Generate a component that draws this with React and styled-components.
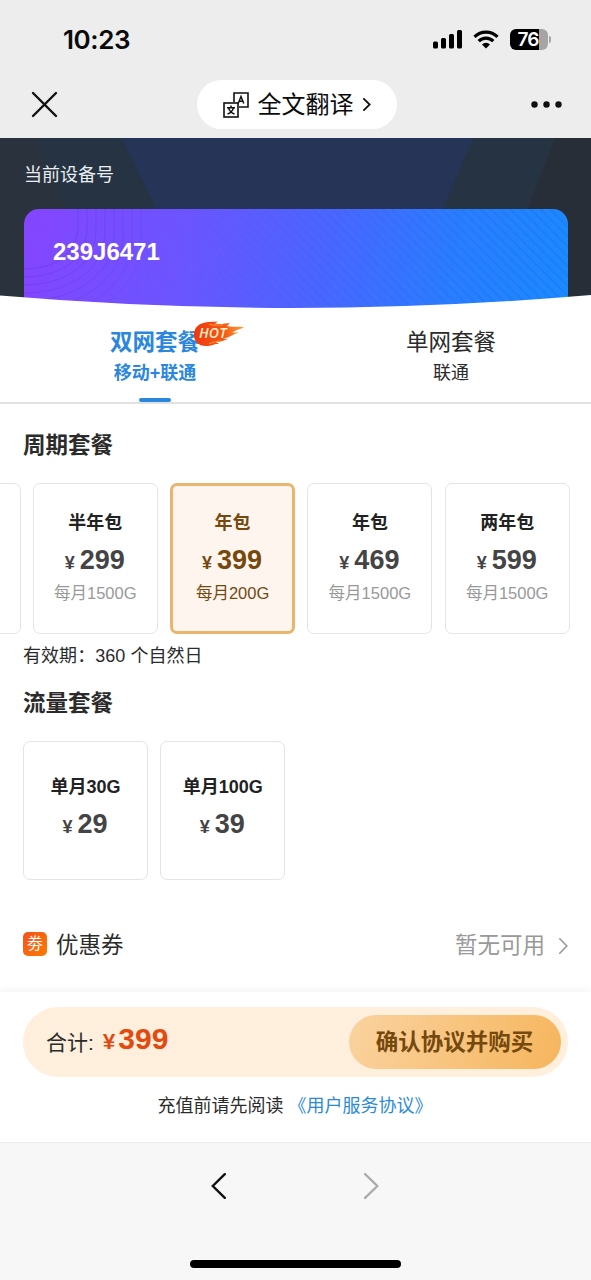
import { useState } from 'react'
import styled, { createGlobalStyle } from 'styled-components'



const GlobalStyle = createGlobalStyle`
  * {
    box-sizing: border-box;
  }
  body {
    margin: 0;
    background-color: white;
    font-family: "Liberation Sans", "Noto Sans CJK SC", sans-serif;
    color: #2b2b2b;
  }
  button {
    border: none;
    padding: 0;
    background: none;
    font-family: inherit;
    color: inherit;
  }
`;

const Page = styled.div`
    width: 591px;
    height: 1280px;
    display: flex;
    flex-direction: column;
    overflow: hidden;
    background-color: white;
`;

/* top of the phone */

const Top = styled.header`
    height: 138px;
    flex-shrink: 0;
    background-color: #ededed;
    color: #0b0b0b;
`;
const StatusBar = styled.div`
    height: 79px;
    display: flex;
    align-items: center;
    justify-content: space-between;
    padding: 0 40px 0 63px;
`;
const Clock = styled.div`
    font-family: Inter, sans-serif;
    font-size: 26px;
    font-weight: 600;
    letter-spacing: -0.4px;
`;
const StatusIcons = styled.div`
    display: flex;
    align-items: center;
    gap: 11px;
`;
const Battery = styled.div`
    display: flex;
    align-items: center;
    gap: 1px;
`;
const BatteryBody = styled.div`
    width: 38px;
    height: 21px;
    border-radius: 6px;
    background: linear-gradient(to right, black 0 29px, #a5a5a5 29px);
    color: white;
    font-family: Inter, sans-serif;
    font-size: 19px;
    font-weight: 600;
    line-height: 21px;
    letter-spacing: -0.8px;
    padding-right: 2px;
    text-align: center;
`;
const BatteryTip = styled.div`
    width: 2px;
    height: 7px;
    border-radius: 0 2px 2px 0;
    background-color: #a5a5a5;
`;
const NavBar = styled.div`
    display: grid;
    grid-template-columns: 1fr 200px 1fr;
    align-items: center;
    padding: 0 29px 0 31px;
    height: 51px;

    > svg:last-child {
      justify-self: end;
    }
`;
const Translate = styled.button`
    width: 200px;
    height: 49px;
    border-radius: 25px;
    background-color: white;
    display: flex;
    align-items: center;
    justify-content: center;
    gap: 9px;
    font-size: 24px;
    line-height: 32px;
`;
const TranslateLabel = styled.span`
    padding-top: 1px;
`;

/* device card */

const Hero = styled.section`
    height: 170px;
    flex-shrink: 0;
    position: relative;
    overflow: hidden;
    background-color: #2a323d;
`;
const HeroArt = styled.svg`
    position: absolute;
    top: 0;
    left: 0;
`;
const HeroBody = styled.div`
    position: relative;
    padding: 25px 23px 0 24px;
`;
const HeroLabel = styled.div`
    height: 46px;
    font-size: 18px;
    line-height: 24px;
    color: #e9eef3;
`;
const DeviceCard = styled.div`
    height: 110px;
    border-radius: 15px 15px 0 0;
    overflow: hidden;
    position: relative;
    background: linear-gradient(100deg, #8545ff 0%, #6a55ff 30%, #4a66ff 55%, #2a7dff 78%, #1b8aff 100%);
`;
const DeviceNumber = styled.div`
    position: relative;
    padding: 29px 0 0 29px;
    font-size: 24px;
    line-height: 28px;
    font-weight: 700;
    color: white;
`;

/* tabs */

const Tabs = styled.nav`
    height: 96px;
    flex-shrink: 0;
    display: grid;
    grid-template-columns: 296px 296px;
    padding-left: 7px;
    border-bottom: 2px solid #e1e2e3;
`;
const Tab = styled.button`
    display: flex;
    flex-direction: column;
    align-items: center;
    padding-top: 19px;
    color: ${props => props.$active ? '#2b87dd' : '#2b2b2b'};
    font-weight: ${props => props.$active ? 700 : 400};
`;
const TabName = styled.span`
    position: relative;
    font-size: 22.5px;
    line-height: 32px;
`;
const TabNet = styled.span`
    font-size: 18px;
    line-height: 28px;
`;
const TabLine = styled.span`
    width: 32px;
    height: 4px;
    margin-top: 11px;
    border-radius: 2px;
    background-color: #2b87dd;
`;
const HotBadge = styled.span`
    position: absolute;
    top: -6px;
    left: 83px;
    width: 52px;
    height: 26px;
    display: flex;

    svg {
      position: absolute;
      top: 0;
      left: 0;
    }
`;
const HotText = styled.span`
    position: relative;
    margin-left: 6px;
    color: #fff3c4;
    font-family: "Open Sans", sans-serif;
    font-size: 14px;
    font-weight: 600;
    font-style: italic;
    line-height: 23px;
    letter-spacing: 0.2px;
`;

/* plans */

const Content = styled.main`
    height: 588px;
    flex-shrink: 0;
    padding: 26px 0 0 23px;
    overflow: hidden;
`;
const Heading = styled.h2`
    margin: 0;
    height: 53px;
    font-size: 22.5px;
    line-height: 32px;
    font-weight: 700;
`;
const PlanRow = styled.div`
    display: flex;
    gap: 12.3px;
    margin-left: ${props => props.$shift || 0}px;
`;
const Plan = styled.div`
    width: 125px;
    height: ${props => props.$height}px;
    flex-shrink: 0;
    display: flex;
    flex-direction: column;
    align-items: center;
    justify-content: center;
    padding-bottom: 3px;
    border: ${props => props.$active ? '3px solid #e9b56c' : '1.5px solid #e4e4e4'};
    border-radius: 7px;
    background-color: ${props => props.$active ? '#fef5ee' : 'white'};
    color: ${props => props.$active ? '#75490e' : '#444'};
`;
const PlanName = styled.div`
    font-size: 18px;
    line-height: 28px;
    font-weight: 700;
    color: ${props => props.$active ? '#75490e' : '#222'};
`;
const Price = styled.div`
    font-size: 27px;
    line-height: 36px;
    margin: 5px 1px 0 0;
    font-weight: 700;
`;
const Yen = styled.span`
    font-size: ${props => props.$size || 18}px;
    margin-right: ${props => props.$gap || 5}px;
`;
const PlanData = styled.div`
    font-size: 16.5px;
    line-height: 24px;
    color: ${props => props.$active ? '#75490e' : '#999'};
`;
const Validity = styled.div`
    height: 54px;
    padding-top: 8px;
    font-size: 18px;
    line-height: 28px;
    letter-spacing: 0.05px;
`;
const Coupon = styled.div`
    display: flex;
    align-items: center;
    height: 32px;
    margin-top: 50px;
    padding-right: 23px;
    font-size: 22.5px;
    line-height: 32px;
`;
const CouponIcon = styled.span`
    width: 24px;
    height: 24px;
    margin: -5px 9px 0 0;
    border-radius: 5px;
    background: linear-gradient(135deg, #f4511e, #ff7a00);
    color: white;
    font-size: 16px;
    line-height: 24px;
    text-align: center;
`;
const CouponState = styled.span`
    margin-left: auto;
    margin-right: 14px;
    color: #999;
`;

/* payment */

const Payment = styled.section`
    height: 150px;
    flex-shrink: 0;
    padding: 15px 23px 0;
    background-color: white;
    box-shadow: 0 -2px 8px rgba(0, 0, 0, 0.05);
`;
const TotalBar = styled.div`
    height: 70px;
    border-radius: 35px;
    background-color: #ffefdc;
    display: flex;
    align-items: center;
    padding: 0 7px 0 23px;
`;
const TotalLabel = styled.span`
    padding-bottom: 2px;
    font-size: 21px;
`;
const Total = styled.span`
    margin-left: 9px;
    padding-bottom: 4px;
    font-size: 30px;
    font-weight: 700;
    line-height: 36px;
    color: #e34a10;
`;
const BuyButton = styled.button`
    width: 212px;
    height: 54px;
    margin-left: auto;
    padding: 2px 1px 0 0;
    border-radius: 27px;
    background: linear-gradient(110deg, #fad3a0, #f6b55c);
    color: #75490e;
    font-size: 22.5px;
    font-weight: 700;
    line-height: 32px;
`;
const Agreement = styled.p`
    margin: 15px 0 0;
    padding-right: 1px;
    font-size: 18px;
    line-height: 28px;
    text-align: center;
`;
const AgreementLink = styled.span`
    color: #2b8ad6;
`;

const Bottom = styled.footer`
    height: 138px;
    flex-shrink: 0;
    display: flex;
    flex-direction: column;
    align-items: center;
    justify-content: space-between;
    padding: 30px 0 12px;
    border-top: 1px solid #ebebeb;
    background-color: #f7f7f7;
`;
const HistoryButtons = styled.div`
    display: flex;
    gap: 138px;
    padding-right: 1px;
`;
const HomeBar = styled.div`
    width: 211px;
    height: 8px;
    border-radius: 4px;
    background-color: black;
`;

const cyclePlans = [
  { id: 0, name: '', price: '', data: '' },
  { id: 1, name: '半年包', price: '299', data: '每月1500G' },
  { id: 2, name: '年包', price: '399', data: '每月200G' },
  { id: 3, name: '年包', price: '469', data: '每月1500G' },
  { id: 4, name: '两年包', price: '599', data: '每月1500G' },
]

const dataPlans = [
  { id: 5, name: '单月30G', price: '29' },
  { id: 6, name: '单月100G', price: '39' },
]

function Chevron({ width, height, color, stroke, left }){
  const s = stroke / 2
  const d = left
    ? `M${width - s} ${s}L${s * 1.5} ${height / 2}L${width - s} ${height - s}`
    : `M${s} ${s}L${width - s * 1.5} ${height / 2}L${s} ${height - s}`
  return (
    <svg width={width} height={height} fill="none" stroke={color} strokeWidth={stroke} strokeLinecap="round">
      <path d={d}/>
    </svg>
  )
}

function TranslateIcon(){
  return (
    <svg width="26" height="26" viewBox="0 0 26 26" fill="none" stroke="#111" strokeWidth="1.6">
      <path d="M11 10V1h14v14h-9"/>
      <rect x="1" y="11" width="14" height="14"/>
      <path d="M15.200 11.500L18 4.500l2.800 7M16.200 9.300h3.600" strokeWidth="1.500"/>
      <path d="M8 13.500v2M4 15.800h8M5.500 16c1 3 3 5 6 6M10.500 16c-1 3-3 5-6 6" strokeWidth="1.500"/>
    </svg>
  )
}

function Signal(){
  return (
    <svg width="30" height="19" viewBox="0 0 30 19" fill="black">
      <rect x="1" y="11.500" width="5" height="7" rx="1.500"/>
      <rect x="9" y="8" width="5" height="10.500" rx="1.500"/>
      <rect x="17" y="4" width="5" height="14.500" rx="1.500"/>
      <rect x="25" y="0" width="5" height="18.500" rx="1.500"/>
    </svg>
  )
}

function Wifi(){
  return (
    <svg width="26" height="19" viewBox="0 0 26 19" fill="none" stroke="black" strokeWidth="3.200">
      <path d="M1.500 6.800a16.300 16.300 0 0 1 23 0"/>
      <path d="M5.700 11.200a10.300 10.300 0 0 1 14.600 0"/>
      <path d="M13 18.500l-4-4a5.700 5.700 0 0 1 8 0z" fill="black" stroke="none"/>
    </svg>
  )
}

function Flame(){
  return (
    <svg width="52" height="26" viewBox="0 0 52 26">
      <defs>
        <linearGradient id="flame" x1="0" y1="0" x2="1" y2="0">
          <stop offset="0" stopColor="#f0380d"/>
          <stop offset="0.6" stopColor="#f4581b"/>
          <stop offset="1" stopColor="#ffa02e"/>
        </linearGradient>
      </defs>
      <path fill="url(#flame)" d="M12 1.500C16 .5 21 1 25 .5L22 2.500C29 4 31 2 37 2L34 5C41 6.500 46 5 51 6.500C46 8 43 9.500 39 11.500L46 11.500C39 13 37 17 30 17.500L35 18.500C31 19 28 21 23 21L26 23C21 22.500 19 25 13 25C5 25 1 20 1 14C1 7 5 3 12 1.500Z"/>
      <path d="M16 22.500C20 22 22 20 28 20M16 3.500C21 4.500 25 4 30 4" stroke="#ff9d2b" fill="none"/>
    </svg>
  )
}

function PlanCard({ plan, height, active, onClick }){
  return (
    <Plan $height={height} $active={active} onClick={onClick}>
      {plan.name && <PlanName $active={active}>{plan.name}</PlanName>}
      {plan.price && <Price><Yen>¥</Yen>{plan.price}</Price>}
      {plan.data && <PlanData $active={active}>{plan.data}</PlanData>}
    </Plan>
  )
}

function App(){
  const [selected, setSelected] = useState(2)
  const total = [...cyclePlans, ...dataPlans].find(plan => plan.id === selected).price

  return (
    <Page>
      <GlobalStyle/>

      <Top>
        <StatusBar>
          <Clock>10:23</Clock>
          <StatusIcons>
            <Signal/>
            <Wifi/>
            <Battery>
              <BatteryBody>76</BatteryBody>
              <BatteryTip/>
            </Battery>
          </StatusIcons>
        </StatusBar>
        <NavBar>
          <svg width="27" height="27" stroke="#111" strokeWidth="2.400" strokeLinecap="round">
            <path d="M2 2l23 23M25 2L2 25"/>
          </svg>
          <Translate>
            <TranslateIcon/>
            <TranslateLabel>全文翻译</TranslateLabel>
            <Chevron width={8} height={13} color="#111" stroke={1.8}/>
          </Translate>
          <svg width="31" height="7" fill="#111">
            <circle cx="3.500" cy="3.500" r="3.200"/>
            <circle cx="15.500" cy="3.500" r="3.200"/>
            <circle cx="27.500" cy="3.500" r="3.200"/>
          </svg>
        </NavBar>
      </Top>

      <Hero>
        <HeroArt width="591" height="170">
          <path d="M35 0H560L500 170H110Z" fill="#263342"/>
          <path d="M122 0H473L401 170H204Z" fill="#263557"/>
          <path d="M555 0H591V170H490Z" fill="#282e38"/>
        </HeroArt>
        <HeroBody>
          <HeroLabel>当前设备号</HeroLabel>
          <DeviceCard>
            <HeroArt width="544" height="110" fill="none">
              <defs>
                <pattern id="stripes" width="7" height="7" patternUnits="userSpaceOnUse" patternTransform="rotate(-45)">
                  <rect width="2" height="7" fill="#0b4fd0" opacity="0.130"/>
                </pattern>
                <linearGradient id="fade">
                  <stop offset="0.300" stopColor="black"/>
                  <stop offset="0.900" stopColor="white"/>
                </linearGradient>
                <mask id="right">
                  <rect width="544" height="110" fill="url(#fade)"/>
                </mask>
              </defs>
              <rect width="544" height="110" fill="url(#stripes)" mask="url(#right)"/>
              {[0, 1, 2, 3, 4, 5, 6, 7].map(i => (
                <path
                  key={i}
                  d={`M${54 + i * 9} 0V${16 + i * 2}C${54 + i * 9} ${46 + i * 6} ${30 + i * 4} ${60 + i * 8} 0 ${60 + i * 8}`}
                  stroke="#3a1fc0"
                  opacity={0.2 - i * 0.015}
                />
              ))}
            </HeroArt>
            <DeviceNumber>239J6471</DeviceNumber>
          </DeviceCard>
        </HeroBody>
        <HeroArt width="591" height="170">
          <path d="M0 157.500Q295 182.500 591 157V170H0Z" fill="white"/>
        </HeroArt>
      </Hero>

      <Tabs>
        <Tab $active>
          <TabName>
            双网套餐
            <HotBadge>
              <Flame/>
              <HotText>HOT</HotText>
            </HotBadge>
          </TabName>
          <TabNet>移动+联通</TabNet>
          <TabLine/>
        </Tab>
        <Tab>
          <TabName>单网套餐</TabName>
          <TabNet>联通</TabNet>
        </Tab>
      </Tabs>

      <Content>
        <Heading>周期套餐</Heading>
        <PlanRow $shift={-127.5}>
          {cyclePlans.map(plan => (
            <PlanCard key={plan.id} plan={plan} height={151} active={plan.id === selected} onClick={() => setSelected(plan.id)}/>
          ))}
        </PlanRow>
        <Validity>有效期：360 个自然日</Validity>
        <Heading>流量套餐</Heading>
        <PlanRow>
          {dataPlans.map(plan => (
            <PlanCard key={plan.id} plan={plan} height={139} active={plan.id === selected} onClick={() => setSelected(plan.id)}/>
          ))}
        </PlanRow>
        <Coupon>
          <CouponIcon>劵</CouponIcon>
          优惠券
          <CouponState>暂无可用</CouponState>
          <Chevron width={9} height={16} color="#999" stroke={1.6}/>
        </Coupon>
      </Content>

      <Payment>
        <TotalBar>
          <TotalLabel>合计:</TotalLabel>
          <Total><Yen $size={22.5} $gap={3}>¥</Yen>{total}</Total>
          <BuyButton>确认协议并购买</BuyButton>
        </TotalBar>
        <Agreement>充值前请先阅读 <AgreementLink>《用户服务协议》</AgreementLink></Agreement>
      </Payment>

      <Bottom>
        <HistoryButtons>
          <Chevron width={15} height={26} color="#111" stroke={2.4} left/>
          <Chevron width={15} height={26} color="#aaa" stroke={2.2}/>
        </HistoryButtons>
        <HomeBar/>
      </Bottom>
    </Page>
  )
}

export default App
